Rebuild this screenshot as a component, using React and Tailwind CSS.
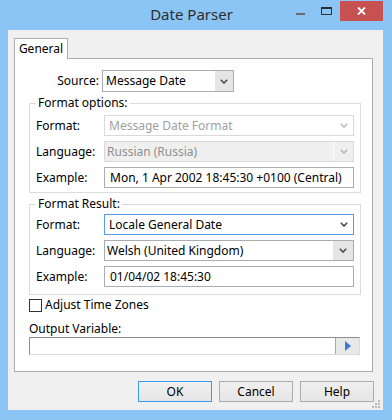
function Chevron({ color = "#4a4a4a" }) {
  return (
    <svg width="8" height="5" viewBox="0 0 8 5">
      <path d="M0.8 0.8L4 4L7.2 0.8" fill="none" stroke={color} strokeWidth="1.6" />
    </svg>
  );
}

function Row({ label, children }) {
  return (
    <div className="flex h-[21px] items-center">
      <div className="w-[68px]">{label}</div>
      <div className="flex h-full flex-1">{children}</div>
    </div>
  );
}

function Button({ label, primary }) {
  return (
    <div
      className={`flex h-[21px] w-[74px] items-center justify-center border bg-gradient-to-b from-[#f0f0f0] to-[#e5e5e5] ${
        primary ? "border-[#3d99f0]" : "border-[#acacac]"
      }`}
    >
      {label}
    </div>
  );
}

export default function App() {
  return (
    <div className="flex h-[420px] w-[392px] flex-col bg-[#8ac5f5] font-['Noto_Sans',sans-serif] text-[12px] leading-[16px] text-black">
      {/* Title bar */}
      <div className="flex h-[30px]">
        <div className="flex-1" />
        <div className="pt-[4px] text-[15px] leading-[20px] text-[#2e2e2e]">Date Parser</div>
        <div className="flex flex-1 items-start justify-end pr-[9px]">
          <div className="mt-[1px] flex h-[20px] w-[26px] items-center justify-center">
            <div className="mt-[6px] h-[2px] w-[9px] bg-[#6a6a6a]" />
          </div>
          <div className="mt-[1px] flex h-[20px] w-[27px] items-center justify-center">
            <svg width="11" height="8" viewBox="0 0 11 8">
              <rect x="0.5" y="1" width="10" height="6.5" fill="none" stroke="#2e2e2e" strokeWidth="1" />
              <rect x="0" y="0" width="11" height="2" fill="#2e2e2e" />
            </svg>
          </div>
          <div className="mt-[1px] flex h-[20px] w-[43px] items-center justify-center bg-[#c75050]">
            <svg width="9" height="8" viewBox="0 0 9 8">
              <path d="M1 0.5L8 7.5M8 0.5L1 7.5" stroke="#ffffff" strokeWidth="1.8" />
            </svg>
          </div>
        </div>
      </div>

      {/* Client area */}
      <div className="relative ml-[8px] mr-[9px] flex h-[380px] flex-col bg-[#f0f0f0]">
        <div className="ml-[6px] mr-[10px] mt-[8px]">
          <div className="relative z-10 -mb-px flex h-[21px] w-[54px] items-center justify-center border border-b-0 border-[#acacac] bg-white">
            General
          </div>
          <div className="flex h-[314px] flex-col border border-[#acacac] bg-white pl-[14px] pr-[11px] pt-[11px]">
            {/* Source */}
            <div className="flex h-[22px] items-center">
              <div className="w-[73px] pr-[3px] text-right">Source:</div>
              <div className="flex h-full w-[132px] border border-[#acacac] bg-white">
                <div className="flex flex-1 items-center pl-[3px]">Message Date</div>
                <div className="flex w-[18px] items-center justify-center bg-[#e5e5e5]">
                  <Chevron />
                </div>
              </div>
            </div>

            {/* Format options */}
            <fieldset className="mt-[3px] border border-[#dcdcdc] px-[6px] pb-[4px]">
              <legend className="px-[2px] leading-[16px]">Format options:</legend>
              <div className="mt-[4px] flex flex-col gap-[5px]">
                <Row label="Format:">
                  <div className="flex flex-1 border border-[#d9d9d9] bg-white text-[#a0a0a0]">
                    <div className="flex flex-1 items-center pl-[4px]">Message Date Format</div>
                    <div className="flex w-[19px] items-center justify-center">
                      <Chevron color="#b8b8b8" />
                    </div>
                  </div>
                </Row>
                <Row label="Language:">
                  <div className="flex flex-1 border border-[#d9d9d9] bg-[#efefef] text-[#8f8f8f]">
                    <div className="flex flex-1 items-center pl-[2px]">Russian (Russia)</div>
                    <div className="flex w-[20px] items-center justify-center border-l border-white">
                      <Chevron color="#b8b8b8" />
                    </div>
                  </div>
                </Row>
                <Row label="Example:">
                  <div className="flex flex-1 items-center border border-[#abadb3] bg-white pl-[5px]">
                    Mon, 1 Apr 2002 18:45:30 +0100 (Central)
                  </div>
                </Row>
              </div>
            </fieldset>

            {/* Format result */}
            <fieldset className="mt-[3px] border border-[#dcdcdc] px-[6px] pb-[7px]">
              <legend className="px-[2px] leading-[16px]">Format Result:</legend>
              <div className="mt-[2px] flex flex-col gap-[5px]">
                <Row label="Format:">
                  <div className="flex flex-1 border border-[#569de5] bg-white">
                    <div className="flex flex-1 items-center pl-[4px]">Locale General Date</div>
                    <div className="flex w-[19px] items-center justify-center">
                      <Chevron />
                    </div>
                  </div>
                </Row>
                <Row label="Language:">
                  <div className="flex flex-1 border border-[#acacac] bg-white">
                    <div className="flex flex-1 items-center pl-[2px]">Welsh (United Kingdom)</div>
                    <div className="flex w-[20px] items-center justify-center bg-[#e5e5e5]">
                      <Chevron />
                    </div>
                  </div>
                </Row>
                <Row label="Example:">
                  <div className="flex flex-1 items-center border border-[#abadb3] bg-white pl-[5px]">
                    01/04/02 18:45:30
                  </div>
                </Row>
              </div>
            </fieldset>

            {/* Adjust time zones */}
            <div className="mt-[2px] flex h-[16px] items-center gap-[3px]">
              <div className="h-[13px] w-[13px] border border-[#333333] bg-white" />
              <span>Adjust Time Zones</span>
            </div>

            {/* Output variable */}
            <div className="mt-[8px]">Output Variable:</div>
            <div className="flex h-[18px] w-[331px] border border-b-[#dadada] border-l-[#8e8e8e] border-r-[#dadada] border-t-[#8e8e8e] bg-white">
              <div className="flex-1" />
              <div className="flex w-[24px] items-center justify-center border-l border-[#a9a9a9] bg-[#e8e8e8]">
                <svg width="6" height="10" viewBox="0 0 6 10">
                  <path d="M0 0L6 5L0 10Z" fill="#3b7bd8" />
                </svg>
              </div>
            </div>
          </div>
        </div>

        {/* Buttons */}
        <div className="mr-[9px] mt-[9px] flex justify-end gap-[7px]">
          <Button label="OK" primary />
          <Button label="Cancel" />
          <Button label="Help" />
        </div>

        {/* Resize grip */}
        <svg className="absolute bottom-[1px] right-[2px]" width="9" height="9" viewBox="0 0 9 9">
          <rect x="6" y="0" width="2" height="2" fill="#b9b9b9" />
          <rect x="3" y="3" width="2" height="2" fill="#b9b9b9" />
          <rect x="6" y="3" width="2" height="2" fill="#b9b9b9" />
          <rect x="0" y="6" width="2" height="2" fill="#b9b9b9" />
          <rect x="3" y="6" width="2" height="2" fill="#b9b9b9" />
          <rect x="6" y="6" width="2" height="2" fill="#b9b9b9" />
        </svg>
      </div>
    </div>
  );
}
